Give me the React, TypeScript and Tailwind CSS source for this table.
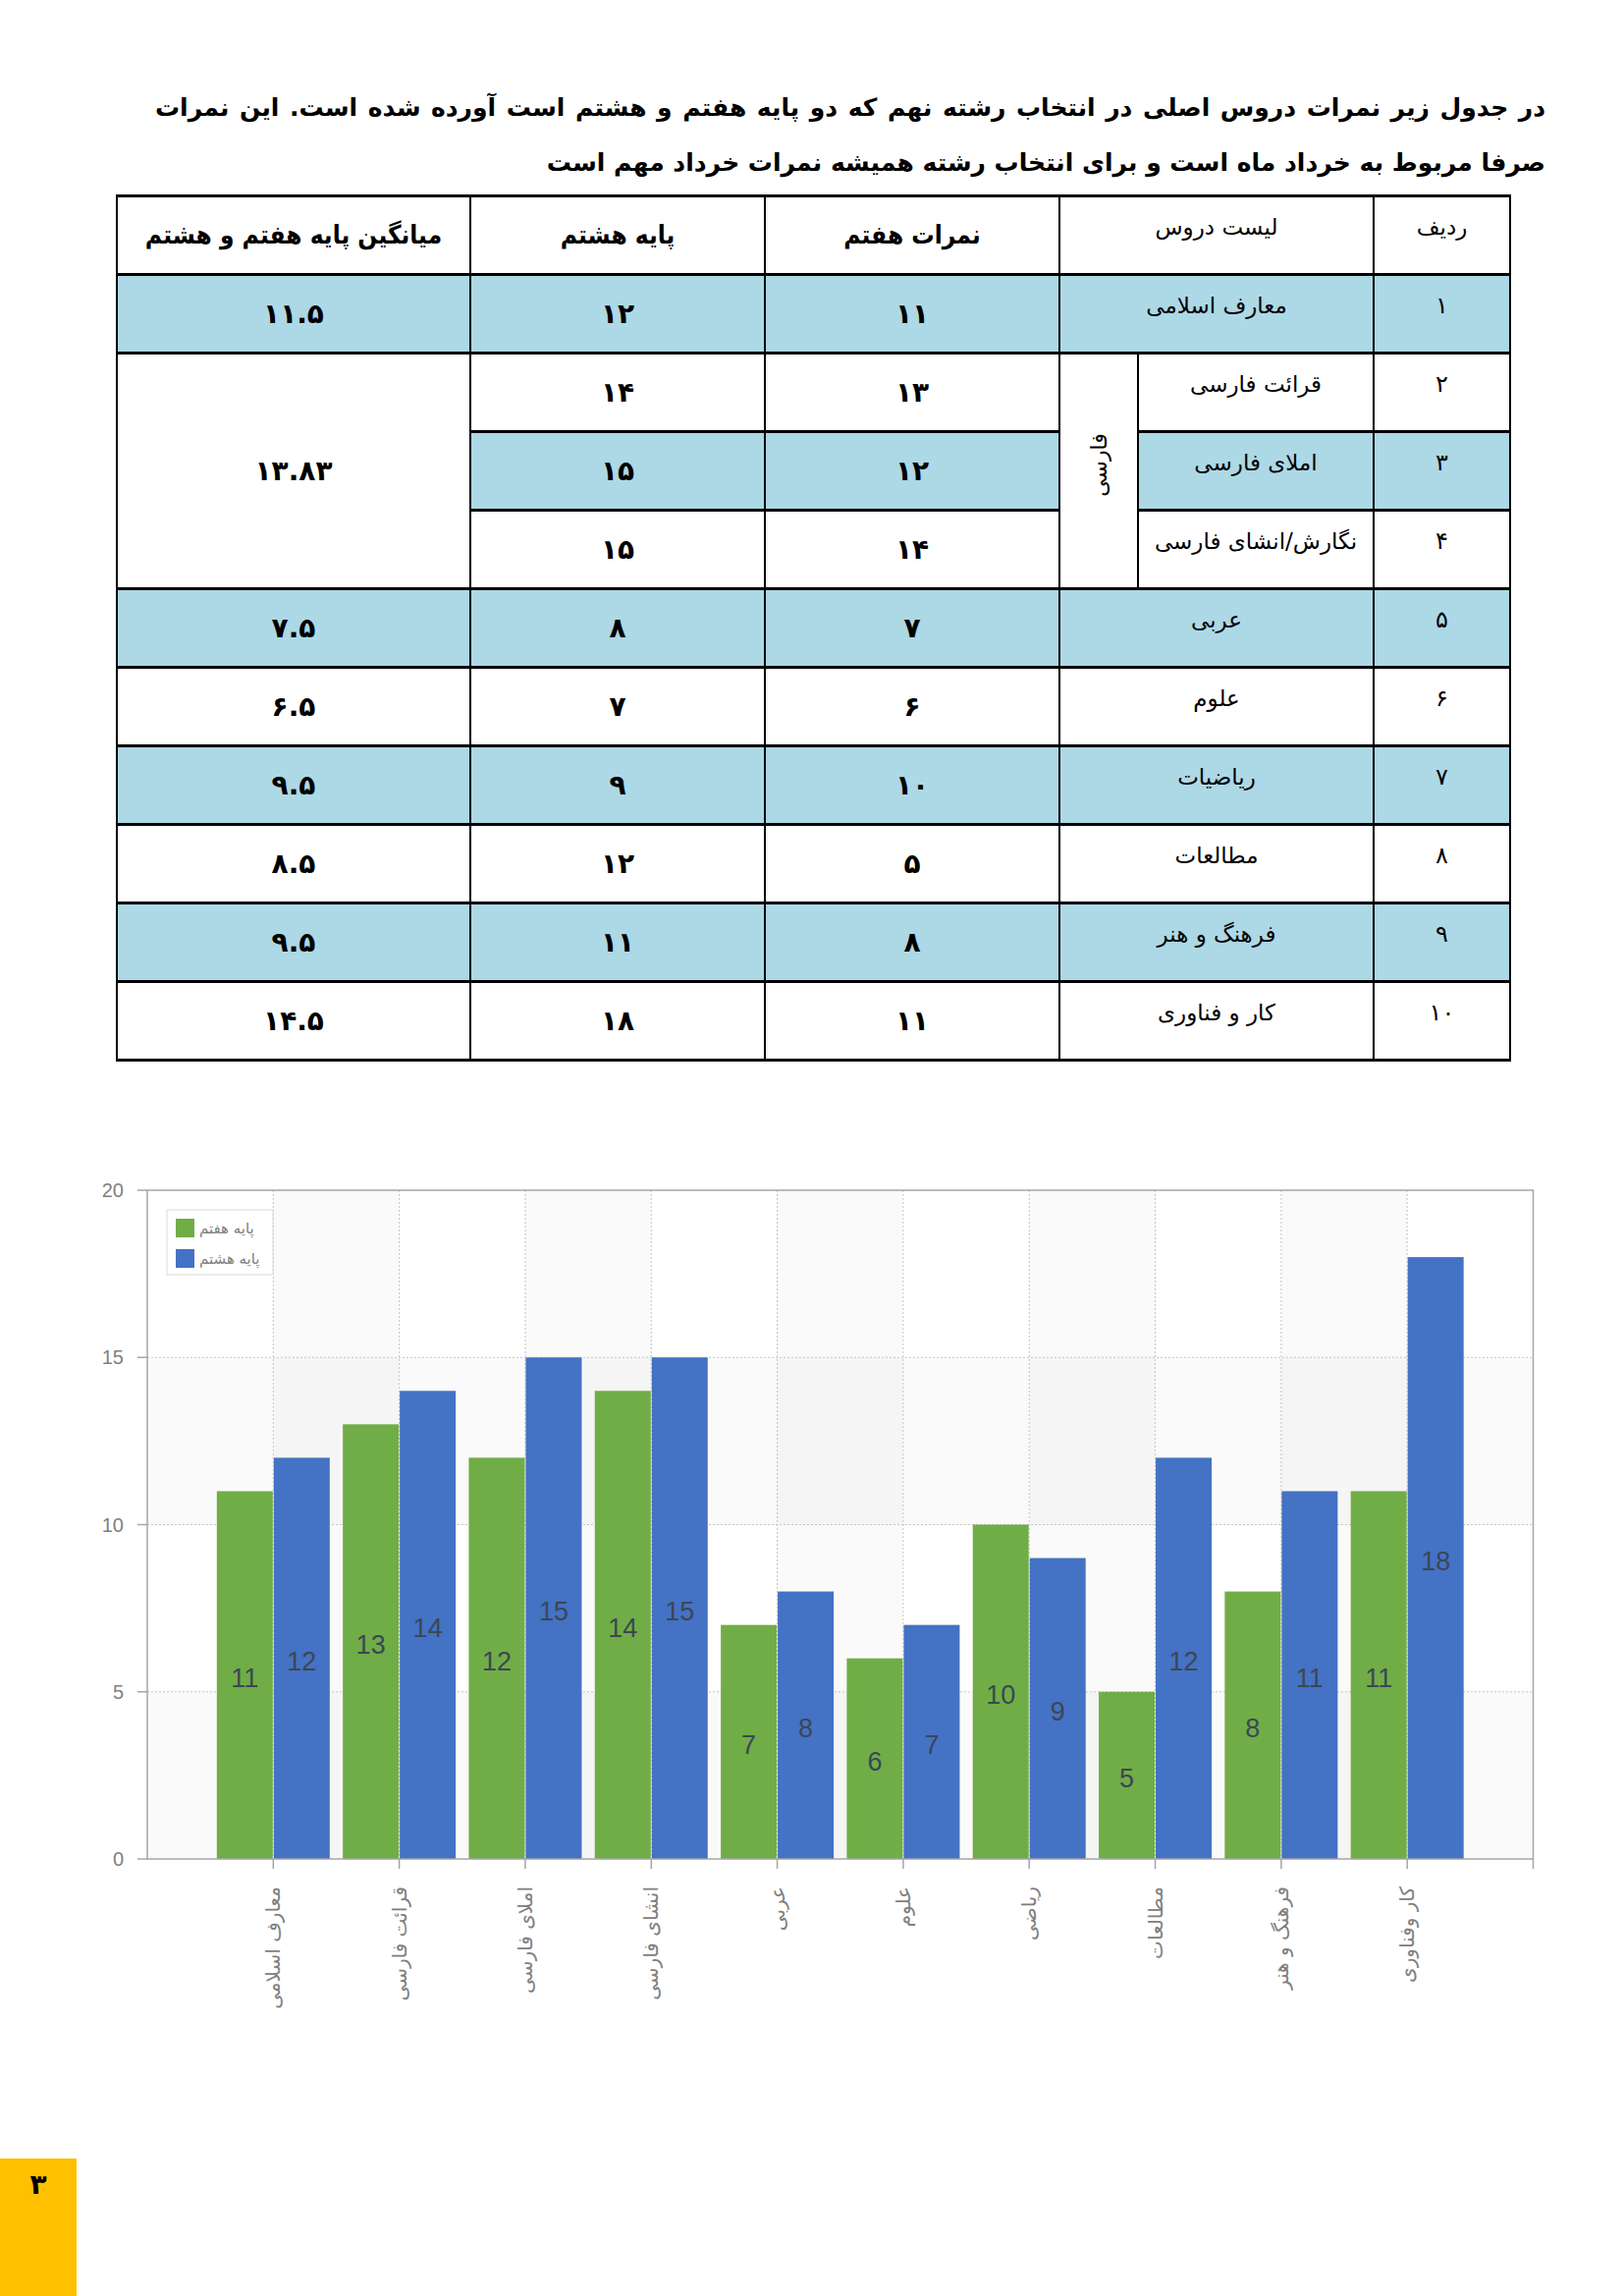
import React from 'react';

type Row = { n: string; name: string; g7: string; g8: string; avg?: string; blue: boolean };

const rows: Row[] = [
  { n: '۱', name: 'معارف اسلامی', g7: '۱۱', g8: '۱۲', avg: '۱۱.۵', blue: true },
  { n: '۲', name: 'قرائت فارسی', g7: '۱۳', g8: '۱۴', avg: '۱۳.۸۳', blue: false },
  { n: '۳', name: 'املای فارسی', g7: '۱۲', g8: '۱۵', blue: true },
  { n: '۴', name: 'نگارش/انشای فارسی', g7: '۱۴', g8: '۱۵', blue: false },
  { n: '۵', name: 'عربی', g7: '۷', g8: '۸', avg: '۷.۵', blue: true },
  { n: '۶', name: 'علوم', g7: '۶', g8: '۷', avg: '۶.۵', blue: false },
  { n: '۷', name: 'ریاضیات', g7: '۱۰', g8: '۹', avg: '۹.۵', blue: true },
  { n: '۸', name: 'مطالعات', g7: '۵', g8: '۱۲', avg: '۸.۵', blue: false },
  { n: '۹', name: 'فرهنگ و هنر', g7: '۸', g8: '۱۱', avg: '۹.۵', blue: true },
  { n: '۱۰', name: 'کار و فناوری', g7: '۱۱', g8: '۱۸', avg: '۱۴.۵', blue: false },
];

const chart = [
  { label: 'معارف اسلامی', a: 11, b: 12 },
  { label: 'قرائت فارسی', a: 13, b: 14 },
  { label: 'املای فارسی', a: 12, b: 15 },
  { label: 'انشای فارسی', a: 14, b: 15 },
  { label: 'عربی', a: 7, b: 8 },
  { label: 'علوم', a: 6, b: 7 },
  { label: 'ریاضی', a: 10, b: 9 },
  { label: 'مطالعات', a: 5, b: 12 },
  { label: 'فرهنگ و هنر', a: 8, b: 11 },
  { label: 'کار وفناوری', a: 11, b: 18 },
];

const cell = 'border-x-2 border-y-[3px] border-black p-0';
const topCell = `${cell} align-top pt-[11px] text-center text-[23px] leading-[38px]`;
const boldCell = `${cell} align-middle text-center font-bold text-[28px]`;
const headBold = `${cell} align-middle text-center font-bold text-[26px] font-['DejaVu_Sans_Condensed','DejaVu_Sans',sans-serif]`;
const blueBg = 'bg-[#ADD8E6]';

const ScoreTable: React.FC = () => (
  <table dir="rtl" className="table-fixed border-collapse w-[1419px] font-['DejaVu_Sans',sans-serif] text-black">
    <colgroup>
      <col className="w-[139px]" />
      <col className="w-[240px]" />
      <col className="w-[80px]" />
      <col className="w-[300px]" />
      <col className="w-[300px]" />
      <col className="w-[360px]" />
    </colgroup>
    <thead>
      <tr className="h-[80px]">
        <th className={`${topCell} font-normal`}>ردیف</th>
        <th colSpan={2} className={`${topCell} font-normal`}>لیست دروس</th>
        <th className={headBold}>نمرات هفتم</th>
        <th className={headBold}>پایه هشتم</th>
        <th className={headBold}>میانگین پایه هفتم و هشتم</th>
      </tr>
    </thead>
    <tbody>
      {rows.map((r, i) => {
        const bg = r.blue ? blueBg : 'bg-white';
        const farsi = i >= 1 && i <= 3;
        return (
          <tr key={r.n} className="h-[80px]">
            <td className={`${topCell} ${bg} text-[24px]`}>{r.n}</td>
            {farsi ? (
              <td className={`${topCell} ${bg} whitespace-nowrap`}>{r.name}</td>
            ) : (
              <td colSpan={2} className={`${topCell} ${bg}`}>{r.name}</td>
            )}
            {i === 1 && (
              <td rowSpan={3} className={`${cell} bg-white text-center align-middle text-[22px]`}>
                <span className="inline-block -rotate-90 -translate-y-[6px]">فارسی</span>
              </td>
            )}
            <td className={`${boldCell} ${bg}`}>{r.g7}</td>
            <td className={`${boldCell} ${bg}`}>{r.g8}</td>
            {i === 1 ? (
              <td rowSpan={3} className={`${boldCell} bg-white`}>{r.avg}</td>
            ) : !farsi ? (
              <td className={`${boldCell} ${bg}`}>{r.avg}</td>
            ) : null}
          </tr>
        );
      })}
    </tbody>
  </table>
);

// plot box, in svg coordinates (svg top sits at page y 1180)
const L = 150;
const R = 1561.5;
const T = 32;
const B = 713;
const U = (R - L) / 11;
const yv = (v: number) => B - (v * (B - T)) / 20;
const cx = (i: number) => L + U * (i + 1);

const GREEN = '#70AD47';
const BLUE = '#4472C4';
const AXIS = '#a6a6a6';
const GRID = '#c4c4c4';

const BarChart: React.FC = () => (
  <svg width={1654} height={900} className="block">
    {/* alternating bands */}
    {[0, 10].map(v => (
      <rect key={'h' + v} x={L} y={yv(v + 5)} width={R - L} height={yv(v) - yv(v + 5)} fill="#000" fillOpacity={0.02} />
    ))}
    {[0, 2, 4, 6, 8].map(i => (
      <rect key={'v' + i} x={cx(i)} y={T} width={U} height={B - T} fill="#000" fillOpacity={0.02} />
    ))}

    {/* grid */}
    {[5, 10, 15].map(v => (
      <line key={'g' + v} x1={L} x2={R} y1={yv(v)} y2={yv(v)} stroke={GRID} strokeWidth={1} strokeDasharray="2 2" />
    ))}
    {chart.map((_, i) => (
      <line key={'gv' + i} x1={cx(i)} x2={cx(i)} y1={T} y2={B} stroke={GRID} strokeWidth={1} strokeDasharray="2 2" />
    ))}

    {/* bars */}
    {chart.map((d, i) => {
      const c = cx(i);
      return (
        <g key={'b' + i}>
          <rect x={c - 57.5} y={yv(d.a)} width={57} height={B - yv(d.a)} fill={GREEN} />
          <rect x={c + 0.5} y={yv(d.b)} width={57} height={B - yv(d.b)} fill={BLUE} />
          <text x={c - 29} y={yv(d.a / 2) + 3} textAnchor="middle" dominantBaseline="central" fontFamily="'Liberation Sans', Arial, sans-serif" fontSize={27} fill="#3b4754">{d.a}</text>
          <text x={c + 29} y={yv(d.b / 2) + 3} textAnchor="middle" dominantBaseline="central" fontFamily="'Liberation Sans', Arial, sans-serif" fontSize={27} fill="#3b4754">{d.b}</text>
        </g>
      );
    })}

    {/* frame and axes */}
    <rect x={L} y={T} width={R - L} height={B - T} fill="none" stroke={AXIS} strokeWidth={1.5} />
    {[0, 5, 10, 15, 20].map(v => (
      <g key={'y' + v}>
        <line x1={L - 10} x2={L} y1={yv(v)} y2={yv(v)} stroke={AXIS} strokeWidth={1.5} />
        <text x={126} y={yv(v)} textAnchor="end" dominantBaseline="central" fontFamily="'Liberation Sans', Arial, sans-serif" fontSize={20} fill="#808080">{v}</text>
      </g>
    ))}
    {[...chart.map((_, i) => cx(i)), R].map((x, i) => (
      <line key={'t' + i} x1={x} x2={x} y1={B} y2={B + 10} stroke={AXIS} strokeWidth={1.5} />
    ))}

    {/* category labels */}
    {chart.map((d, i) => (
      <text
        key={'l' + i}
        x={cx(i)}
        y={741}
        transform={`rotate(-90 ${cx(i)} 741)`}
        textAnchor="end"
        dominantBaseline="central"
        fontFamily="'DejaVu Sans', sans-serif"
        fontSize={20}
        fill="#808080"
      >
        {d.label}
      </text>
    ))}

    {/* legend */}
    <rect x={170} y={52} width={108} height={66} fill="#fff" stroke="#d9d9d9" strokeWidth={1} />
    <rect x={179} y={61} width={19} height={19} fill={GREEN} />
    <rect x={179} y={92} width={19} height={19} fill={BLUE} />
    <text x={203} y={70.5} dominantBaseline="central" fontFamily="'DejaVu Sans', sans-serif" fontSize={15} fill="#808080">پایه هفتم</text>
    <text x={203} y={101.5} dominantBaseline="central" fontFamily="'DejaVu Sans', sans-serif" fontSize={15} fill="#808080">پایه هشتم</text>
  </svg>
);

export default function App() {
  return (
    <div className="w-[1654px] h-[2338px] bg-white flex flex-col overflow-hidden">
      <div dir="rtl" className="pt-[82px] pl-[158px] pr-[80px] font-['DejaVu_Sans',sans-serif] font-bold text-[25px] leading-[56px] text-black">
        <div className="text-justify [text-align-last:justify] whitespace-nowrap">
          در جدول زیر نمرات دروس اصلی در انتخاب رشته نهم که دو پایه هفتم و هشتم است آورده شده است. این نمرات
        </div>
        <div>صرفا مربوط به خرداد ماه است و برای انتخاب رشته همیشه نمرات خرداد مهم است</div>
      </div>

      <div className="mt-1 ml-[118px] h-[885px]">
        <ScoreTable />
      </div>

      <div className="mt-[97px]">
        <BarChart />
      </div>

      <div className="mt-auto w-[78px] h-[140px] bg-[#FFC000] flex justify-center pt-[10px] font-['DejaVu_Sans',sans-serif] font-bold text-[28px] leading-[34px] text-black">
        ۳
      </div>
    </div>
  );
}
